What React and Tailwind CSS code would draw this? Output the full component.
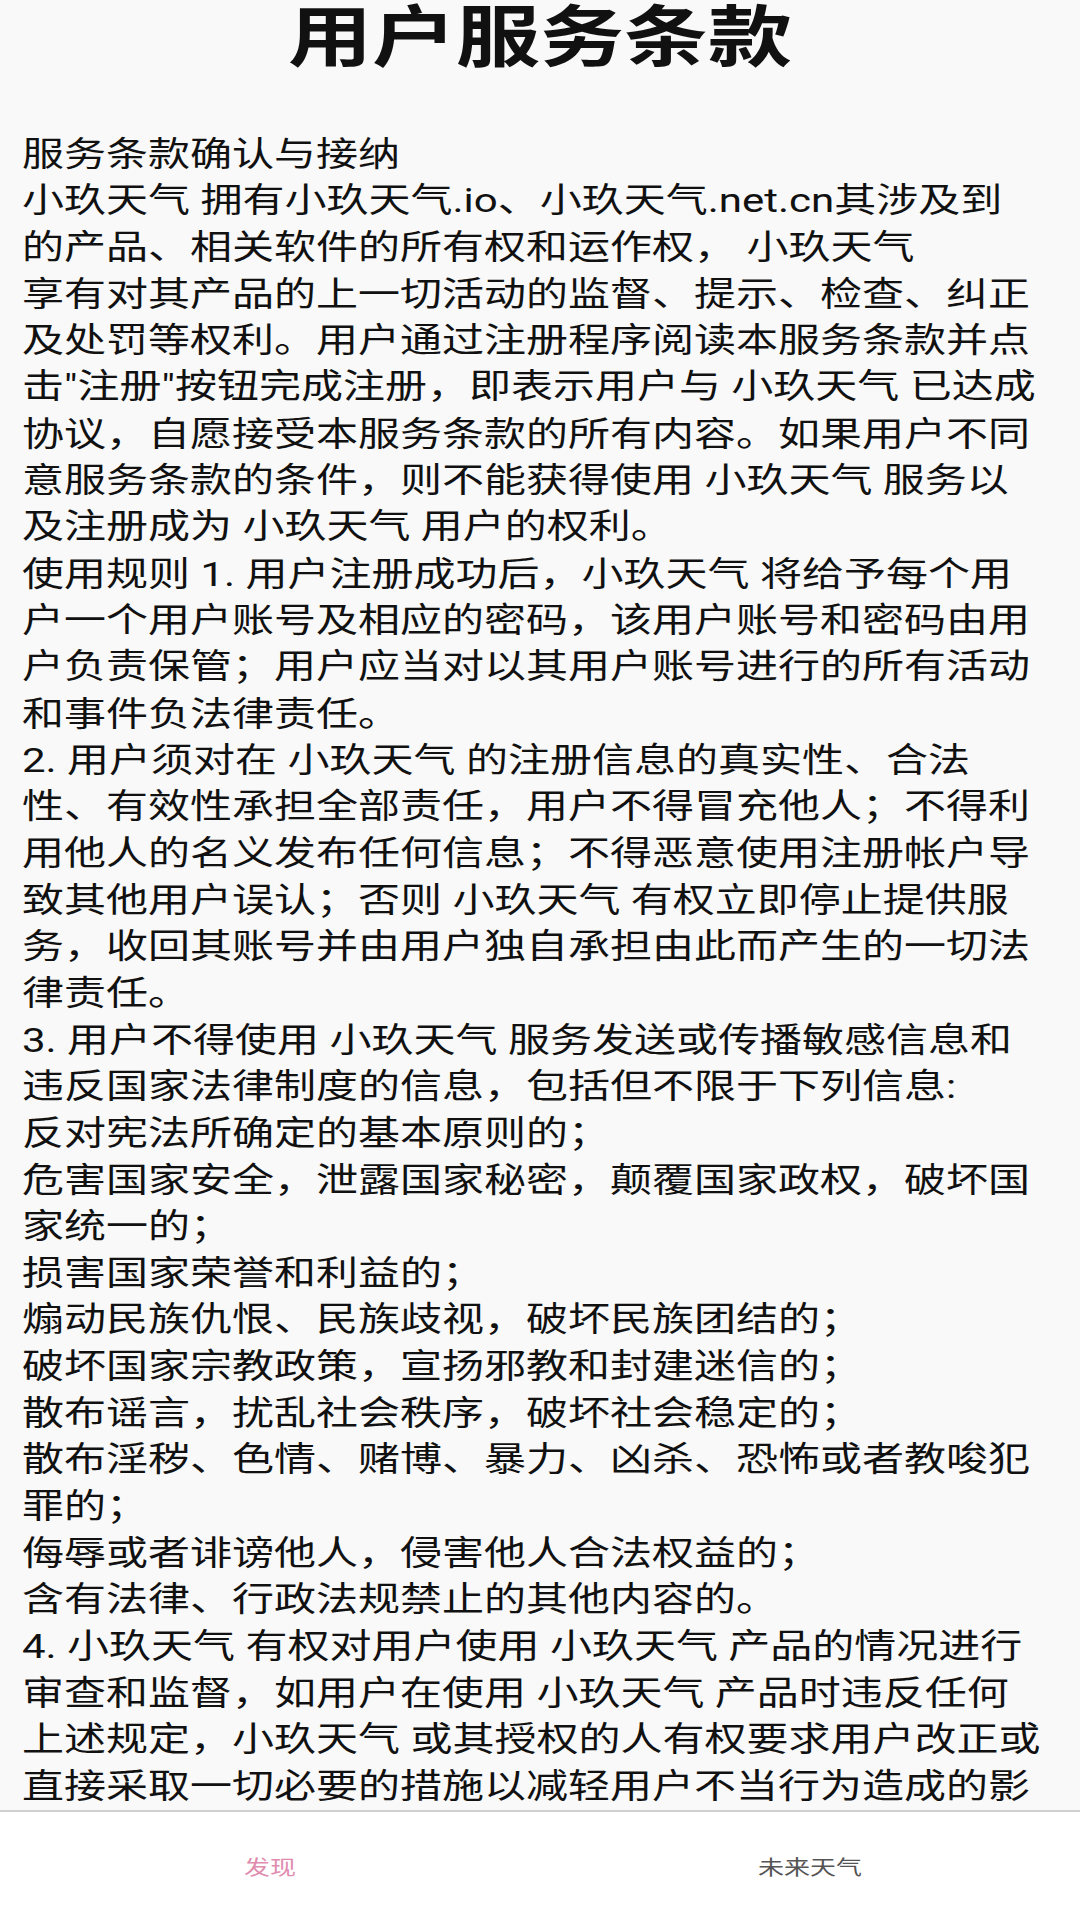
const lines = [
  '服务条款确认与接纳',
  '小玖天气 拥有小玖天气.io、小玖天气.net.cn其涉及到',
  '的产品、相关软件的所有权和运作权， 小玖天气',
  '享有对其产品的上一切活动的监督、提示、检查、纠正',
  '及处罚等权利。用户通过注册程序阅读本服务条款并点',
  '击"注册"按钮完成注册，即表示用户与 小玖天气 已达成',
  '协议，自愿接受本服务条款的所有内容。如果用户不同',
  '意服务条款的条件，则不能获得使用 小玖天气 服务以',
  '及注册成为 小玖天气 用户的权利。',
  '使用规则 1. 用户注册成功后，小玖天气 将给予每个用',
  '户一个用户账号及相应的密码，该用户账号和密码由用',
  '户负责保管；用户应当对以其用户账号进行的所有活动',
  '和事件负法律责任。',
  '2. 用户须对在 小玖天气 的注册信息的真实性、合法',
  '性、有效性承担全部责任，用户不得冒充他人；不得利',
  '用他人的名义发布任何信息；不得恶意使用注册帐户导',
  '致其他用户误认；否则 小玖天气 有权立即停止提供服',
  '务，收回其账号并由用户独自承担由此而产生的一切法',
  '律责任。',
  '3. 用户不得使用 小玖天气 服务发送或传播敏感信息和',
  '违反国家法律制度的信息，包括但不限于下列信息:',
  '反对宪法所确定的基本原则的；',
  '危害国家安全，泄露国家秘密，颠覆国家政权，破坏国',
  '家统一的；',
  '损害国家荣誉和利益的；',
  '煽动民族仇恨、民族歧视，破坏民族团结的；',
  '破坏国家宗教政策，宣扬邪教和封建迷信的；',
  '散布谣言，扰乱社会秩序，破坏社会稳定的；',
  '散布淫秽、色情、赌博、暴力、凶杀、恐怖或者教唆犯',
  '罪的；',
  '侮辱或者诽谤他人，侵害他人合法权益的；',
  '含有法律、行政法规禁止的其他内容的。',
  '4. 小玖天气 有权对用户使用 小玖天气 产品的情况进行',
  '审查和监督，如用户在使用 小玖天气 产品时违反任何',
  '上述规定，小玖天气 或其授权的人有权要求用户改正或',
  '直接采取一切必要的措施以减轻用户不当行为造成的影',
];

const tabs = [
  { label: '发现', active: true },
  { label: '未来天气', active: false },
];

export default function App() {
  return (
    <div className="flex h-[1920px] w-[1080px] flex-col bg-[#f9f9f9] font-['Roboto','Noto_Sans_CJK_SC',sans-serif] text-[#111111]">
      <main className="flex-1 overflow-hidden">
        {/* the reference is squashed vertically, so the text is too */}
        <div className="origin-top scale-y-[0.8]">
          <h1 className="pt-[2px] text-center text-[84px] font-bold leading-[92px]">用户服务条款</h1>
          <div className="mt-[70px] px-[22px] text-[42px] leading-[58.3px]">
            {lines.map((line, i) => (
              <div key={i} className="whitespace-pre">
                {line}
              </div>
            ))}
          </div>
        </div>
      </main>

      <nav className="flex h-[110px] border-t-2 border-[#cfcfcf] bg-white">
        {tabs.map((tab) => (
          <div key={tab.label} className="flex flex-1 items-center justify-center pt-[4px]">
            <span
              className={`scale-y-[0.8] py-[4px] text-[26px] leading-[34px] ${
                tab.active ? 'text-[#e08caf]' : 'text-[#555555]'
              }`}
            >
              {tab.label}
            </span>
          </div>
        ))}
      </nav>
    </div>
  );
}
